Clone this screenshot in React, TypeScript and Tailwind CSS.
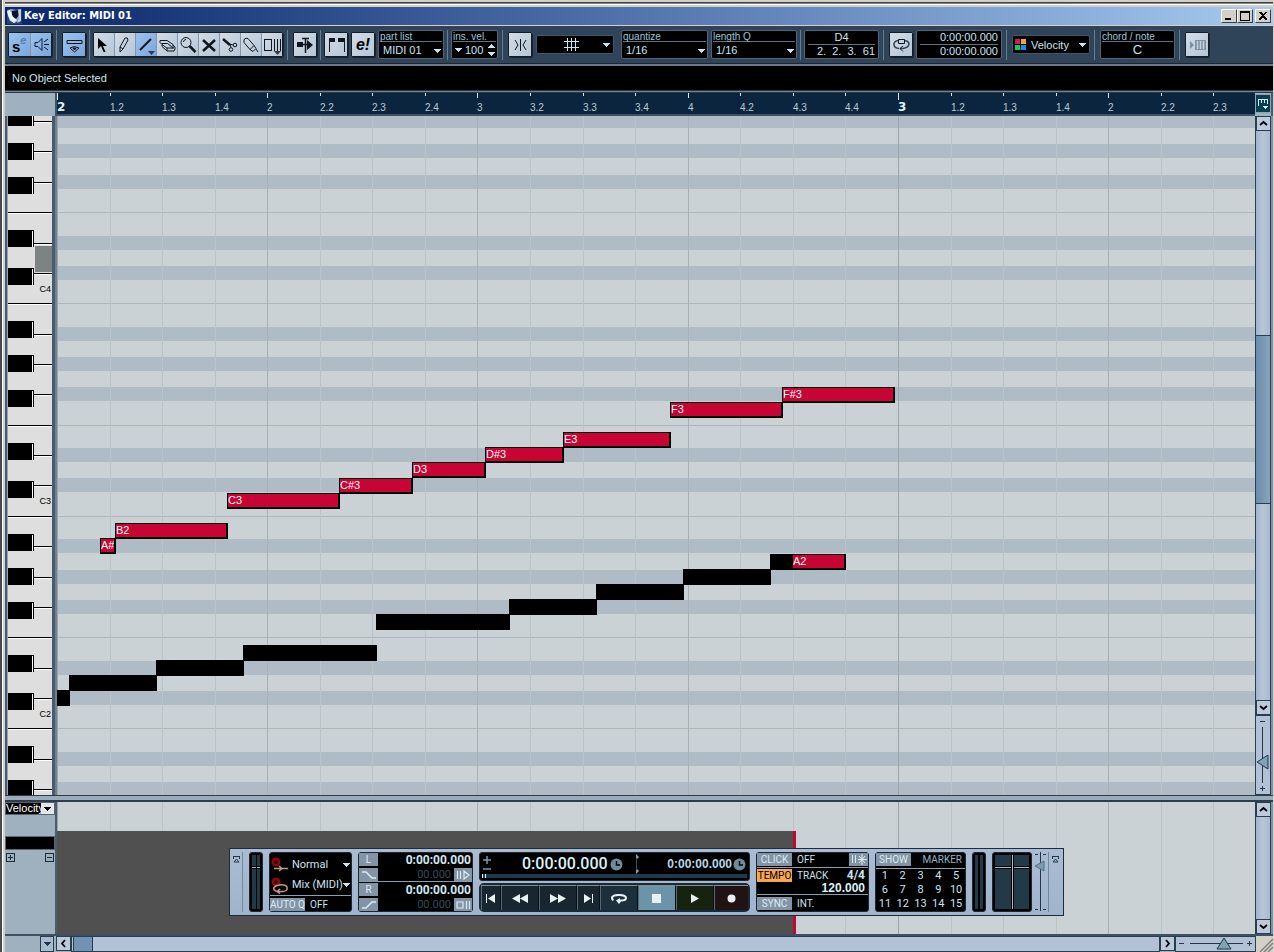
import React from 'react';
import clsx from 'clsx';

const BEAT = 52.56;

// Rows of the piano roll, top to bottom: height, black-key row, line on top
const ROWS: [number, boolean, boolean][] = [
  [12, true, false], [16, false, false], [14, true, false], [17, false, false], [14, true, false], [23, false, false],
  [24, false, true], [14, true, false], [16, false, false], [14, true, false], [23, false, false],
  [24, false, true], [14, true, false], [16, false, false], [14, true, false], [16, false, false], [14, true, false], [24, false, false],
  [23, false, true], [14, true, false], [16, false, false], [14, true, false], [24, false, false],
  [23, false, true], [14, true, false], [17, false, false], [14, true, false], [16, false, false], [14, true, false], [23, false, false],
  [24, false, true], [14, true, false], [16, false, false], [14, true, false], [23, false, false],
  [24, false, true], [14, true, false], [16, false, false], [13, true, false],
];

const NOTES: { x: number; y: number; w: number; name?: string }[] = [
  { x: 43, y: 422, w: 16, name: 'A#' },
  { x: 58, y: 407, w: 113, name: 'B2' },
  { x: 170, y: 377, w: 113, name: 'C3' },
  { x: 282, y: 362, w: 74, name: 'C#3' },
  { x: 355, y: 346, w: 74, name: 'D3' },
  { x: 428, y: 331, w: 79, name: 'D#3' },
  { x: 506, y: 316, w: 108, name: 'E3' },
  { x: 613, y: 286, w: 113, name: 'F3' },
  { x: 725, y: 271, w: 113, name: 'F#3' },
  { x: 0, y: 574, w: 13 },
  { x: 12, y: 559, w: 88 },
  { x: 99, y: 544, w: 88 },
  { x: 186, y: 529, w: 134 },
  { x: 319, y: 498, w: 134 },
  { x: 452, y: 483, w: 88 },
  { x: 539, y: 468, w: 88 },
  { x: 626, y: 453, w: 88 },
  { x: 735, y: 438, w: 54, name: 'A2' },
  { x: 713, y: 438, w: 23 },
];

const BLACK_KEYS = [-7, 27, 61, 114, 152, 205, 239, 274, 327, 365, 418, 452, 486, 539, 577, 630, 664];
const SHORT_LINES = [5, 35, 66, 127, 157, 218, 248, 278, 339, 369, 430, 461, 491, 552, 582, 643, 673];
const LONG_LINES = [96, 187, 309, 400, 521, 612];

const RULER = ['2', '1.2', '1.3', '1.4', '2', '2.2', '2.3', '2.4', '3', '3.2', '3.3', '3.4', '4', '4.2', '4.3', '4.4', '3', '1.2', '1.3', '1.4', '2', '2.2', '2.3'];

const beatWidth = (i: number) => Math.round((i + 1) * BEAT) - Math.round(i * BEAT);

const Caret = ({ className }: { className?: string }) => (
  <svg viewBox="0 0 7 4" className={clsx('pointer-events-none h-1 w-[7px] shrink-0', className)} fill="currentColor" shapeRendering="crispEdges">
    <path d="M0 0h7v1h-1v1h-1v1h-1v1h-1v-1h-1v-1h-1v-1h-1z" />
  </svg>
);

const Sep = ({ className = 'ml-1 mr-[5px]' }: { className?: string }) => (
  <div className={clsx('h-[30px] w-px shrink-0 bg-[#5f7f92]', className)} />
);

const Icon = ({ children }: { children: React.ReactNode }) => (
  <svg viewBox="0 0 21 22" width={21} height={22} fill="none" stroke="#10151c" strokeWidth="1" className="shrink-0">
    {children}
  </svg>
);

const ToolButton = ({ label, children, active }: { label: string; children: React.ReactNode; active?: boolean }) => (
  <button
    aria-label={label}
    className={clsx(
      'flex h-[23px] flex-1 items-center justify-center overflow-hidden',
      active ? 'bg-linear-to-br from-[#9cc3ef] to-[#7ba6da]' : 'bg-linear-to-br from-[#d3dce6] to-[#b4c6d8]',
    )}
  >
    {children}
  </button>
);

const Group = ({ children, className }: { children: React.ReactNode; className?: string }) => (
  <div className={clsx('flex shrink-0 divide-x divide-[#8496aa] rounded-xs border border-[#141c26] shadow-[1px_1px_0_#1a2430]', className)}>
    {children}
  </div>
);

const Panel = ({ label, children, className }: { label: string; children: React.ReactNode; className?: string }) => (
  <div className={clsx('flex h-[29px] shrink-0 flex-col rounded-xs border border-[#4f6679] bg-black px-px text-[#c9e4f0]', className)}>
    <span className="h-[11px] border-b border-[#5d7482] text-[10px] leading-[11px] text-[#9fc4d4]">{label}</span>
    {children}
  </div>
);

const ListBox = ({ label, value, className }: { label: string; value: string; className?: string }) => (
  <Panel label={label} className={className}>
    <div className="relative flex flex-1 items-center">
      <select aria-label={label} className="w-full appearance-none bg-transparent pl-[3px] text-[11px] leading-[14px] outline-none">
        <option>{value}</option>
      </select>
      <Caret className="absolute right-px top-[7px]" />
    </div>
  </Panel>
);

const TimeBox = ({ top, bottom, className }: { top: string; bottom: string; className?: string }) => (
  <div className={clsx('flex h-[29px] shrink-0 flex-col rounded-xs border border-[#4f6679] bg-black px-[3px] text-[11px] leading-[13px] text-[#c9e4f0]', className)}>
    <span className="border-b border-[#5d7482]">{top}</span>
    <span className="whitespace-pre text-right">{bottom}</span>
  </div>
);

const TitleBar = () => (
  <header className="flex h-[18px] items-center bg-linear-to-r from-[#0a246a] to-[#a6caf0] pl-[2px] pr-[2px]">
    <svg viewBox="0 0 15 15" className="size-[15px]">
      <rect width="15" height="15" fill="#24427c" />
      <path d="M0 2 4 0l5 1 5-1v6l-2 6-5 2-4-2-2-5z" fill="#8fa4bd" />
      <path d="M5 2l6-1 1 5-3 4-4-3z" fill="#071431" />
      <path d="M0 2 3 1l3 7 4 3-3 3-4-3-2-5z" fill="#eef3f8" />
      <path d="M11 1l3-1v12l-4 2 2-5z" fill="#c3d0de" />
    </svg>
    <h1 className="ml-[2px] flex-1 font-['DejaVu_Sans_Condensed','DejaVu_Sans'] text-[11px] font-bold leading-[18px] text-white">Key Editor: MIDI 01</h1>
    {[
      { label: 'Minimize', d: 'M3 8h6v2H3z' },
      { label: 'Maximize', d: 'M2 1h10v10H2zM3 3v7h8V3z' },
      { label: 'Close', d: 'M3 2h2l2 2 2-2h2L8 5.500 11 9v1H9L7 7.500 5 10H3V9l3-3.500z' },
    ].map(({ label, d }) => (
      <button
        key={label}
        aria-label={label}
        className={clsx('h-[14px] w-4 border border-b-[#404040] border-l-white border-r-[#404040] border-t-white bg-[#d4d0c8]', label === 'Close' && 'ml-[2px]')}
      >
        <svg viewBox="0 0 14 12" className="h-3 w-[14px]" shapeRendering="crispEdges"><path d={d} fillRule="evenodd" /></svg>
      </button>
    ))}
  </header>
);

const Tools = () => (
  <Group className="w-[190px]">
    <ToolButton label="Object selection"><Icon><path d="M4 4v11l3-3 2.500 6h2l-2.500-6h4z" fill="#000" stroke="none" /></Icon></ToolButton>
    <ToolButton label="Draw"><Icon><path d="M5 18v-5l5-9q3-1 3 2l-5 9zM5 13l3 2" /></Icon></ToolButton>
    <ToolButton label="Line" active>
      <Icon><path d="M4 16 15 5" strokeWidth="2" /><path d="M12 17h7l-3.500 4z" fill="#333a48" stroke="none" /></Icon>
    </ToolButton>
    <ToolButton label="Erase">
      <Icon>
        <path d="M3 6.500h7l6 4v3l-1 1" />
        <path d="M3 6.500v2l2 2M4.500 9.500h6l5 4M5 10.500l4 3" />
        <path d="M5 10.500v2l5 4.500h7l1-2v-2l-2-2M10 17v-3h7M9 13.500l1 .5" />
      </Icon>
    </ToolButton>
    <ToolButton label="Zoom"><Icon><circle cx="8" cy="8.500" r="5" /><path d="M5.500 8q0-2.500 2.500-2.500" /><path d="M11.500 12l6 6" strokeWidth="2.500" /></Icon></ToolButton>
    <ToolButton label="Mute"><Icon><path d="M4 6l12 11M16 6 4 17" strokeWidth="2.500" /></Icon></ToolButton>
    <ToolButton label="Split">
      <Icon><path d="M3 5l7 6" strokeWidth="2.500" /><circle cx="15" cy="11" r="1.800" /><circle cx="11" cy="15.500" r="1.800" /><path d="M9 10l4 1M10 10l1 3.500" /></Icon>
    </ToolButton>
    <ToolButton label="Glue"><Icon><path d="M3 5.500q2-2 4-1l6 7-4 4-6-7zM13 11.500l2 3-3 3-3-2M15 15l2 3" /></Icon></ToolButton>
    <ToolButton label="Time warp">
      <Icon>
        <path d="M2.500 5v12M9.500 5v12M12.500 5v12M15.500 5v12M18.500 5v12M2 5.500h8M2 16.500h8" shapeRendering="crispEdges" />
        <path d="M12 17h7l-3.500 4z" fill="#333a48" stroke="none" />
      </Icon>
    </ToolButton>
  </Group>
);

const Toolbar = () => (
  <div className="flex h-[37px] items-center overflow-hidden bg-[#2f4359] pl-[3px]">
    <Group className="w-11">
      <ToolButton label="Solo editor" active>
        <b className="self-end text-[15px] leading-[18px] text-black">s</b>
        <i className="self-start text-[11px] font-bold leading-[14px] text-[#5c7ca4]">e</i>
      </ToolButton>
      <ToolButton label="Acoustic feedback" active>
        <Icon><path d="M5 8.500h3l4-4v12l-4-4H5zM14 8l4-3M14 10.500h5M14 13l4 3" stroke="#0c1c33" /></Icon>
      </ToolButton>
    </Group>
    <Sep />
    <Group className="w-6">
      <ToolButton label="Show info" active>
        <Icon><path d="M3 6.500h15v3H3z" /><path d="M6 14q4.500-3 9 0l-4.500 4z" /><path d="M9 14h3l-1.500 2z" fill="#10151c" /></Icon>
      </ToolButton>
    </Group>
    <Sep className="mx-[3px]" />
    <Tools />
    <Sep />
    <Group className="w-6">
      <ToolButton label="Autoscroll">
        <Icon><path d="M2 8h6v5H2zM12 6l6 5-6 5z" fill="#10151c" stroke="none" /><path d="M7 10.500h6M10.500 4v15M7 4.500h7" strokeWidth="1.500" /></Icon>
      </ToolButton>
    </Group>
    <Sep className="mx-[3px]" />
    <Group className="w-6">
      <ToolButton label="Show part borders">
        <Icon><path d="M3 4h6v4H4v10H3zM12 4h7v14h-1V8h-6z" fill="#10151c" stroke="none" /></Icon>
      </ToolButton>
    </Group>
    <Group className="ml-[3px] w-6">
      <ToolButton label="Edit active part only">
        <span className="text-[16px] font-bold italic leading-[20px] text-black">e!</span>
      </ToolButton>
    </Group>
    <ListBox label="part list" value="MIDI 01" className="ml-[3px] w-[66px]" />
    <Sep className="mx-[3px]" />
    <Panel label="ins. vel." className="w-[47px]">
      <div className="flex flex-1 items-center gap-[3px] pl-[2px]">
        <Caret />
        <input aria-label="Insert velocity" defaultValue="100" className="w-5 bg-transparent text-[11px] leading-[14px] outline-none" />
        <span className="flex flex-col gap-1">
          <Caret className="rotate-180" />
          <Caret />
        </span>
      </div>
    </Panel>
    <Sep />
    <Group className="w-6">
      <ToolButton label="Snap">
        <Icon><path d="M10.500 5v12M5 6l3 5-3 5M16 6l-3 5 3 5" /></Icon>
      </ToolButton>
    </Group>
    <button aria-label="Snap type" className="relative ml-1 flex h-[19px] w-[78px] shrink-0 items-center justify-center rounded-xs border border-[#3f566b] bg-black text-[#c9e4f0]">
      <svg viewBox="0 0 15 13" className="mr-2 h-[13px] w-[15px]" stroke="currentColor" shapeRendering="crispEdges">
        <path d="M3.500 0v13M7.500 0v13M11.500 0v13M0 3.500h15M0 9.500h15" />
      </svg>
      <Caret className="absolute right-[3px] top-[7px]" />
    </button>
    <ListBox label="quantize" value="1/16" className="ml-[7px] w-[87px]" />
    <ListBox label="length Q" value="1/16" className="ml-[3px] w-[86px]" />
    <Sep className="mx-[3px]" />
    <TimeBox top="D4" bottom="2.  2.  3.  61" className="w-[75px] text-center" />
    <Sep />
    <Group className="w-6">
      <ToolButton label="Independent track loop">
        <Icon>
          <path d="M7 6.500C1 8 2 14 8 14.500M14 6.500c6 1.500 5 7-2 8H9" stroke="#33404e" strokeWidth="1.500" />
          <path d="M7.500 5.500h6v4h-6z" /><path d="M12 12l-3 2.500 3 3" />
        </Icon>
      </ToolButton>
    </Group>
    <TimeBox top="0:00:00.000" bottom="0:00:00.000" className="ml-[3px] w-[86px] text-right" />
    <Sep />
    <div className="relative flex h-[19px] w-[78px] shrink-0 items-center gap-[5px] rounded-xs border border-[#3f566b] bg-black pl-[2px] text-[#c9e4f0]">
      <span className="grid grid-cols-2 gap-px">
        <i className="size-[5px] bg-[#d81848]" />
        <i className="size-[5px] bg-[#f4a048]" />
        <i className="size-[5px] bg-[#18c860]" />
        <i className="size-[5px] bg-[#1890e8]" />
      </span>
      <select aria-label="Event colors" className="flex-1 appearance-none bg-transparent text-[11px] leading-[16px] outline-none">
        <option>Velocity</option>
      </select>
      <Caret className="absolute right-[3px] top-[7px]" />
    </div>
    <Sep />
    <Panel label="chord / note" className="w-[75px]">
      <span className="text-center text-[13px] leading-[16px]">C</span>
    </Panel>
    <Sep />
    <Group className="w-6">
      <ToolButton label="Step input">
        <Icon><path d="M3 7l4 4-4 4zM8 6h11v10H8z" fill="#8090a2" stroke="none" /><path d="M10.500 7v8M13.500 7v8M16.500 7v8" stroke="#c5d1de" strokeWidth="1.500" /></Icon>
      </ToolButton>
    </Group>
  </div>
);

const Ruler = () => (
  <div className="flex h-[23px] bg-[#9fb0be]">
    <div className="w-[50px] shrink-0" />
    <div className="flex min-w-0 flex-1 overflow-hidden border-b-2 border-l-2 border-[#3e5062] bg-[#0b253e] text-[10px] text-[#bcccd4]">
      {RULER.map((label, i) => {
        const bar = i % 16 === 0;
        return (
          <div key={i} className="flex shrink-0 flex-col justify-between" style={{ width: beatWidth(i) }}>
            <div className={clsx('w-px bg-[#dbe8ee]', bar ? 'h-[7px]' : i % 4 === 0 ? 'h-[5px]' : 'h-[3px]')} />
            <span className={bar ? "font-['DejaVu_Sans'] text-[12px] font-bold leading-[13px] text-[#dcf0f4]" : 'leading-[12px]'}>{label}</span>
          </div>
        );
      })}
    </div>
    <button aria-label="Ruler format" className="mt-px flex h-[19px] w-4 shrink-0 items-center justify-center border border-[#8aa4b0] bg-[#063f50]">
      <svg viewBox="0 0 12 14" className="h-[14px] w-3" fill="none" stroke="#d4ecf2" shapeRendering="crispEdges">
        <path d="M1.500 9V2.500h9V7M4.500 2v4M7.500 2v4" /><path d="M5 9h6l-3 3z" fill="#d4ecf2" stroke="none" />
      </svg>
    </button>
    <div className="w-[2px] shrink-0 bg-[#4c5a68]" />
  </div>
);

const Keyboard = () => (
  <div className="relative w-11 shrink-0 overflow-hidden bg-[#dedede]">
    {LONG_LINES.map((y) => (
      <div key={y} className="absolute inset-x-0 h-[2px] border-t border-black bg-white" style={{ top: y }} />
    ))}
    {SHORT_LINES.map((y) => (
      <div key={y} className="absolute left-[26px] right-0 h-[2px] border-t border-black bg-white" style={{ top: y }} />
    ))}
    {BLACK_KEYS.map((y) => (
      <div key={y} className="absolute left-0 h-[17px] w-[26px] border-r border-t border-black bg-white pr-px" style={{ top: y }}>
        <div className="h-full bg-black" />
      </div>
    ))}
    <div className="absolute left-[27px] right-0 top-[130px] h-[26px] bg-[#7d8282]" />
    {[['C4', 168], ['C3', 380], ['C2', 593]].map(([name, y]) => (
      <span key={name} className="absolute right-px text-[9px] leading-[10px] text-black" style={{ top: y }}>{name}</span>
    ))}
  </div>
);

// Vertical beat lines shared by the roll and the controller lane
const BeatLines = () => (
  <div className="absolute inset-0 flex overflow-hidden">
    {RULER.map((_, i) => (
      <div
        key={i}
        className={clsx('shrink-0 border-l', i % 16 === 0 ? 'border-[#9ea5a9]' : i % 4 === 0 ? 'border-[#a9b1b6]' : 'border-[#b9c4c9]')}
        style={{ width: beatWidth(i) }}
      />
    ))}
  </div>
);

const PianoRoll = () => (
  <div className="relative min-w-0 flex-1 overflow-hidden bg-[#cad2d5]">
    {ROWS.map(([h, dark, line], i) => (
      <div key={i} className={clsx(dark ? 'bg-[#afbbc5]' : 'bg-[#cad2d5]', line && 'border-t border-[#adb7bb]')} style={{ height: h }} />
    ))}
    <BeatLines />
    {NOTES.map((n) => (
      <div
        key={`${n.x}-${n.y}`}
        className={clsx('absolute h-4 overflow-hidden border border-black border-b-2 border-r-2 text-[11px] leading-[13px] text-white', n.name ? 'bg-[#c80434]' : 'bg-black')}
        style={{ left: n.x, top: n.y, width: n.w }}
      >
        {n.name}
      </div>
    ))}
  </div>
);

const Arrow = ({ dir }: { dir: 'up' | 'down' | 'left' | 'right' }) => (
  <button aria-label={`Scroll ${dir}`} className="flex size-[15px] shrink-0 items-center justify-center border border-[#26404e] bg-[#bccadb]">
    <svg
      viewBox="0 0 9 9"
      className={clsx('size-[9px]', dir === 'down' && 'rotate-180', dir === 'left' && '-rotate-90', dir === 'right' && 'rotate-90')}
      fill="none"
      stroke="#000"
      strokeWidth="1.800"
    >
      <path d="M1 6l3.500-3L8 6" />
    </svg>
  </button>
);

const VScroll = ({ thumb }: { thumb?: boolean }) => (
  <div className="flex min-h-0 flex-1 flex-col border-x border-[#26404e] bg-linear-to-r from-[#a3b4cc] via-[#b8c6d9] to-[#aab9cf]">
    <Arrow dir="up" />
    <div className="relative flex-1">
      {thumb && <div className="absolute inset-x-0 top-[204px] h-[169px] border-y border-[#26404e] bg-linear-to-r from-[#6d8cab] to-[#86a4be]" />}
    </div>
    <Arrow dir="down" />
  </div>
);

const Led = () => (
  <span className="flex h-full flex-1 flex-col gap-px">
    <i className="h-[11px] bg-[#223a47]" />
    <i className="h-px bg-[#a7bcc4]" />
    <i className="flex-1 bg-[#223a47]" />
  </span>
);

const Display = ({ children, className }: { children: React.ReactNode; className?: string }) => (
  <div className={clsx('shrink-0 rounded-[3px] border border-[#1c2834] bg-black', className)}>{children}</div>
);

const Tag = ({ children, className = 'h-[13px] w-[35px] bg-[#8295a7] text-[#dcebf2]' }: { children: React.ReactNode; className?: string }) => (
  <button className={clsx('flex shrink-0 items-center justify-center text-[10px] leading-[13px]', className)}>{children}</button>
);

const ModeSelect = ({ label, value, cycle }: { label: string; value: string; cycle?: boolean }) => (
  <div className="relative flex h-5 shrink-0 items-center gap-[3px] pl-px">
    <svg viewBox="0 0 18 17" className="h-[17px] w-[18px] shrink-0" fill="none" stroke="#c8948c" strokeWidth="1.500">
      <circle cx="5" cy="5" r="4.500" fill="#8c0808" stroke="none" />
      <path d="M5 3v4M3 5h4" stroke="#200" />
      {cycle ? <path d="M6 8.500q8-2 10 1.500 1 4-4 4.500H6q-4-1-3-4 1-1.500 3-2M9 12l-3 2.500 3 2" /> : <path d="M3 11.500h14M8 9l3 2.500L8 14" />}
    </svg>
    <select aria-label={label} className="w-full appearance-none bg-transparent font-['Roboto'] text-[11px] leading-[14px] text-[#c9e4f0] outline-none">
      <option>{value}</option>
    </select>
    <Caret className="absolute right-px top-2 text-[#c9e4f0]" />
  </div>
);

const Locator = ({ name, d, children }: { name: string; d: string; children: React.ReactNode }) => (
  <div className="grid h-[28px] grid-cols-[19px_1fr] grid-rows-[14px_13px] gap-y-px">
    <Tag className="h-[13px] bg-[#8295a7] text-[#dcebf2]">{name}</Tag>
    <b className="pr-px text-right text-[12px] leading-[14px] text-[#cfe8f0]">0:00:00.000</b>
    <Tag className="h-[13px] bg-[#8295a7]">
      <svg viewBox="0 0 16 10" className="h-[10px] w-4" fill="none" stroke="#dcebf2" strokeWidth="1.500"><path d={d} /></svg>
    </Tag>
    <div className="flex justify-end gap-[3px] text-[11px] leading-[13px] text-[#3a4a56]">
      00.000
      <Tag className="h-[13px] w-[18px] bg-[#8295a7]">
        <svg viewBox="0 0 16 10" className="h-[10px] w-4" fill="none" stroke="#dcebf2" strokeWidth="1.200">{children}</svg>
      </Tag>
    </div>
  </div>
);

const Clock = () => (
  <svg viewBox="0 0 13 13" className="size-[13px]"><circle cx="6.500" cy="6.500" r="6" fill="#6f8c9c" /><path d="M6.500 3v4H10" fill="none" stroke="#000" strokeWidth="1.500" /></svg>
);

const TRANSPORT = [
  { label: 'Previous', w: 'w-[20px]', bg: 'bg-[#17262f]', d: 'M1 1h1v9H1zM10 1v9L3 5.500z', vb: 11 },
  { label: 'Rewind', w: 'w-[38px]', bg: 'bg-[#17262f]', d: 'M8 1v9L0 5.500zM16 1v9L8 5.500z', vb: 16 },
  { label: 'Forward', w: 'w-[38px]', bg: 'bg-[#17262f]', d: 'M0 1v9l8-4.500zM8 1v9l8-4.500z', vb: 16 },
  { label: 'Next', w: 'w-[23px]', bg: 'bg-[#17262f]', d: 'M1 1v9l7-4.500zM9 1h1v9H9z', vb: 11 },
  { label: 'Cycle', w: 'w-[38px]', bg: 'bg-[#1c303c]', d: 'M8 1c5 0 8 1.500 8 4s-2 3.500-6 3.500L8 11 5 7.500 9 5v1.500c3 0 5-.5 5-1.500s-2-2-6-2-6 .8-6 2c0 .6.500 1 1 1.500L2 8C1 7.500 0 6.500 0 5c0-2.500 3-4 8-4z', vb: 16 },
  { label: 'Stop', w: 'w-[38px]', bg: 'bg-[#6c94a8]', d: 'M1 1h9v9H1z', vb: 11 },
  { label: 'Play', w: 'w-[38px]', bg: 'bg-[#16240f]', d: 'M2 1v9l8-4.500z', vb: 11 },
  { label: 'Record', w: 'flex-1', bg: 'bg-[#211214]', d: 'M5.500 1.500a4 4 0 1 1 0 8 4 4 0 0 1 0-8z', vb: 11 },
];

const Collapse = () => (
  <button aria-label="Collapse" className="size-[7px] shrink-0">
    <svg viewBox="0 0 7 7" fill="none" stroke="#22384a"><path d="M0 .5h7M1 6l2.500-3L6 6zM.5 1v2M6.500 1v2" /></svg>
  </button>
);

const TransportPanel = () => (
  <section className="absolute bottom-9 left-[224px] flex h-[68px] gap-[6px] border border-[#1b2c3c] bg-linear-to-b from-[#a9bcd3] to-[#a0b4cc] p-[3px] pr-1 font-['Roboto'] text-[10px] text-[#c9e4f0]">
    <div className="w-[10px] shrink-0 border-r border-[#71889f]"><Collapse /></div>
    <Display className="flex w-[14px] gap-px p-[2px]"><Led /><Led /></Display>
    <Display className="flex w-[83px] flex-col pt-[2px]">
      <ModeSelect label="Linear record mode" value="Normal" />
      <ModeSelect label="Cycle record mode" value="Mix (MIDI)" cycle />
      <div className="flex items-center gap-[5px] border-t border-[#8ba0ad] pt-px"><Tag>AUTO Q</Tag>OFF</div>
    </Display>
    <Display className="w-[115px]">
      <Locator name="L" d="M1 2h4l6 6h4"><path d="M2.500 1v8M5.500 1v8M9 1v8l5-4z" /></Locator>
      <div className="mb-px h-px bg-[#8ba0ad]" />
      <Locator name="R" d="M1 8h4l6-6h4"><path d="M2 2h6v6H2zM11.500 1v8M14.500 1v8" /></Locator>
    </Display>
    <div className="flex w-[271px] shrink-0 flex-col justify-between">
      <Display className="flex h-[29px] flex-col justify-between p-[2px] pt-px">
        <div className="flex items-center">
          <svg viewBox="0 0 10 16" className="h-4 w-[10px]" stroke="#7d98a8" strokeWidth="1.500"><path d="M1 4h8M5 0v8M1 13h8" /></svg>
          <span className="ml-[30px] text-[16px] font-medium leading-[20px] text-[#dcf2f8]">0:00:00.000</span>
          <span className="ml-[2px]"><Clock /></span>
          <svg viewBox="0 0 5 20" className="ml-3 h-5 w-[5px]" fill="#8aa4b2"><path d="M1 0l3 3-2 2v10l2 2-3 3v-4h.5V4H1z" /></svg>
          <b className="ml-auto font-['Liberation_Sans'] text-[12px] text-[#b5d9e6]">0:00:00.000</b>
          <span className="ml-px mr-px"><Clock /></span>
        </div>
        <div className="h-1 bg-[#223a47]"><div className="h-1 w-1 border-x border-[#dcf2f8]" /></div>
      </Display>
      <div className="flex h-[29px] divide-x divide-[#0a1016] rounded-[5px] border-2 border-[#1b2a38]">
        {TRANSPORT.map(({ label, w, bg, d, vb }) => (
          <button key={label} aria-label={label} className={clsx('flex items-center justify-center border-t border-t-[#7d8d98] inset-shadow-[1px_0_0_#586872]', w, bg)}>
            <svg viewBox={`0 0 ${vb} 11`} width={vb} height={11} fill="#e8f0f2"><path d={d} /></svg>
          </button>
        ))}
      </div>
    </div>
    <Display className="flex w-[113px] flex-col">
      <div className="flex h-[15px] items-start gap-[5px] border-b border-[#8ba0ad]">
        <Tag>CLICK</Tag>
        <span className="flex-1 leading-[14px]">OFF</span>
        <Tag className="h-[13px] w-[19px] bg-[#8295a7]">
          <svg viewBox="0 0 17 11" className="h-[11px] w-[17px]" fill="none" stroke="#dcebf2"><path d="M2.500 1v8M5.500 1v8M12 0v11M8 5.500h9M9 2l6 7M15 2 9 9" /></svg>
        </Tag>
      </div>
      <div className="mt-px flex items-start gap-[5px]">
        <Tag className="h-[13px] w-[35px] bg-[#f6a550] text-black">TEMPO</Tag>
        <span className="leading-[13px]">TRACK</span>
        <b className="ml-auto pr-[3px] text-[12px] leading-[13px]">4/4</b>
      </div>
      <b className="pr-[3px] text-right font-['Liberation_Sans'] text-[12px] leading-[12px] text-[#dcf2f8]">120.000</b>
      <div className="flex items-center gap-[5px] border-t border-[#8ba0ad] pt-px"><Tag>SYNC</Tag>INT.</div>
    </Display>
    <Display className="flex w-[91px] flex-col">
      <div className="flex items-start justify-between border-b border-[#8ba0ad] pb-px pr-[3px]"><Tag>SHOW</Tag><span className="leading-[14px] text-[#8fb4c4]">MARKER</span></div>
      <div className="grid flex-1 grid-cols-5 text-center text-[11px] leading-[14px]">
        {Array.from({ length: 15 }, (_, i) => <button key={i}>{i + 1}</button>)}
      </div>
    </Display>
    <Display className="flex w-[14px] gap-[2px] p-[2px]">
      <i className="flex-1 bg-[#223a47]" /><i className="flex-1 bg-[#223a47]" />
    </Display>
    <Display className="flex w-10 gap-px p-[2px]"><Led /><i className="w-px bg-[#a7bcc4]" /><Led /></Display>
    <label className="relative -ml-1 w-[15px] shrink-0 border-r border-[#71889f]">
      <input type="range" aria-label="Output level" className="absolute inset-0 w-3 opacity-0" />
      <svg viewBox="0 0 12 60" className="h-[60px] w-3" stroke="#22384a" fill="none"><path d="M6.500 0v59M1 2.500h3M9 2.500h3M1 57.500h3M9 57.500h3" /><path d="M1 14l9-5v10z" fill="#7d9cae" stroke="#55707f" /></svg>
    </label>
    <div className="-ml-[3px]"><Collapse /></div>
  </section>
);

const ControllerLane = () => (
  <div className="flex min-h-[132px] flex-1 border-t-2 border-[#2f3d4a]">
    <div className="w-[50px] shrink-0 bg-[#9fb0be]">
      <div className="flex h-[13px] overflow-hidden border border-[#5b6672] bg-black text-white">
        <select aria-label="Controller" className="h-[11px] w-[35px] appearance-none overflow-hidden bg-black text-[11px] leading-[11px] outline-none">
          <option>Velocity</option>
        </select>
        <span className="flex flex-1 items-center justify-center bg-[#e4e8ec] text-black"><Caret /></span>
      </div>
      <div className="mt-[21px] h-[14px] border border-[#5b6672] bg-black" />
      <div className="flex justify-between px-px pt-[3px]">
        {['Add lane', 'Remove lane'].map((label) => (
          <button key={label} aria-label={label} className="size-[9px]">
            <svg viewBox="0 0 9 9" fill="none" stroke="#1a2c3c" shapeRendering="crispEdges"><path d={label === 'Add lane' ? 'M.5.5h8v8h-8zM2 4.500h5M4.500 2v5' : 'M.5.5h8v8h-8zM2 4.500h5'} /></svg>
          </button>
        ))}
      </div>
    </div>
    <div className="relative flex min-w-0 flex-1 flex-col overflow-hidden border-l-2 border-[#4a5c6c] bg-[#cad2d5]">
      <BeatLines />
      <div className="relative mt-[29px] w-[739px] flex-1 border-r-[3px] border-[#c80434] bg-[#505050]" />
    </div>
    <div className="flex w-4 shrink-0 flex-col"><VScroll /></div>
    <div className="w-[2px] shrink-0 bg-[#7f91a2]" />
  </div>
);

const BottomBar = () => (
  <footer className="flex h-[18px] shrink-0 border-t-2 border-[#3e5062] bg-[#9fb0be]">
    <div className="flex w-[51px] shrink-0 justify-end pr-[2px]">
      <button aria-label="Lane presets" className="flex w-[14px] items-center justify-center border border-[#26404e] bg-[#a9bbcf] text-[#22384a]"><Caret className="w-[5px]" /></button>
    </div>
    <Arrow dir="left" />
    <div className="flex-1 border border-[#26404e] bg-[#b2c1d6] pl-px"><div className="h-full w-5 border-x border-[#26404e] bg-[#7392b3]" /></div>
    <Arrow dir="right" />
    <label className="relative h-4 w-[81px] border border-[#26404e] bg-[#b2c1d6]">
      <input type="range" aria-label="Horizontal zoom" className="absolute inset-0 w-full opacity-0" />
      <svg viewBox="0 0 79 14" className="h-[14px] w-[79px]" fill="none" stroke="#22384a"><path d="M3 6.500h5M14 6.500h53M71 6.500h5M73.500 4v5" /><path d="M41 12l7-11 7 11z" fill="#7fa3b5" /></svg>
    </label>
    <svg viewBox="0 0 17 16" className="h-4 w-[17px] bg-[#d4d0c8]" stroke="#808080" strokeWidth="1.500"><path d="M4 16 17 3M8 16l9-9M12 16l5-5" /></svg>
  </footer>
);

const App = () => (
  <div className="flex min-h-screen bg-[#d4d0c8] font-['Liberation_Sans',sans-serif]">
    <div className="w-[5px] shrink-0 border-l-2 border-[#45484c] bg-[#d4d0c8]"><div className="h-full w-px bg-white" /></div>
    <div className="relative flex min-w-0 flex-1 flex-col">
      <div className="h-[3px] border-b border-[#3c4246]" />
      <div className="h-1 border-b-2 border-t border-b-[#d4d0c8] border-t-[#808688] bg-white" />
      <TitleBar />
      <div className="h-px" />
      <Toolbar />
      <div className="h-[3px] border-t border-[#1a2632] bg-[#6e7a86]" />
      <output className="h-6 bg-black pl-[7px] text-[11px] leading-[24px] text-[#cfe6ee]">No Object Selected</output>
      <div className="h-[3px] border-b border-t border-[#2b3946] bg-[#76838f]" />
      <Ruler />
      <main className="flex border-b border-[#2f3d4a]">
        <div className="flex shrink-0 border-l-2 border-r-[3px] border-[#4a5c6c] bg-[#8ea4bc] pl-px"><Keyboard /></div>
        <div className="w-[2px] shrink-0 bg-[#6d829a]" />
        <PianoRoll />
        <div className="flex w-4 shrink-0 flex-col">
          <VScroll thumb />
          <label className="relative h-20 border border-[#26404e] bg-[#b2c1d6]">
            <input type="range" aria-label="Vertical zoom" className="absolute inset-0 w-3 opacity-0" />
            <svg viewBox="0 0 14 78" className="h-[78px] w-[14px]" fill="none" stroke="#22384a"><path d="M4 5.500h5M6.500 11v56M4 72.500h5M6.500 70v5" /><path d="M1 46l11-7v14z" fill="#7fa3b5" /></svg>
          </label>
        </div>
        <div className="w-[2px] shrink-0 bg-[#7f91a2]" />
      </main>
      <div className="h-1 bg-[#9aacba]" />
      <ControllerLane />
      <BottomBar />
      <TransportPanel />
    </div>
    <div className="w-px shrink-0 bg-[#d4d0c8]" />
  </div>
);

export default App;
